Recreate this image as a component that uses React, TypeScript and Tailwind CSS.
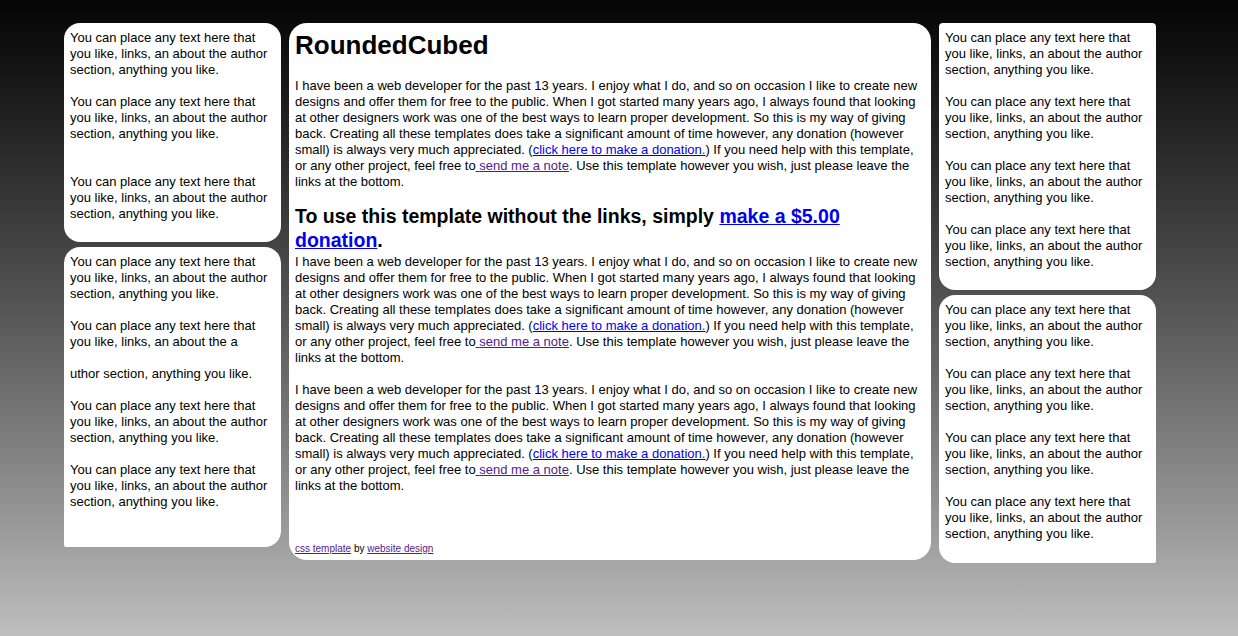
const sideText = "You can place any text here that you like, links, an about the author section, anything you like.";

function Paragraph() {
  return (
    <p className="leading-4">
      I have been a web developer for the past 13 years. I enjoy what I do, and so on occasion I like to create new
      designs and offer them for free to the public. When I got started many years ago, I always found that looking at
      other designers work was one of the best ways to learn proper development. So this is my way of giving back.
      Creating all these templates does take a significant amount of time however, any donation (however small) is
      always very much appreciated. (
      <a href="#" className="text-[#0000ee] underline">
        click here to make a donation.
      </a>
      ) If you need help with this template, or any other project, feel free to
      <a href="#" className="text-[#551a8b] underline">
        {" "}send me a note
      </a>
      . Use this template however you wish, just please leave the links at the bottom.
    </p>
  );
}

export default function App() {
  return (
    <div className="min-h-[636px] bg-linear-to-b from-[#060606] to-[#bebebe] font-['Liberation_Sans',Arial,sans-serif] text-[13px] leading-4 text-black">
      <div className="flex items-start gap-2 pl-16 pt-[23px]">
        {/* left column */}
        <div className="flex w-[217px] flex-col gap-[5px]">
          <div className="rounded-2xl bg-white px-[6px] pt-[7px] pb-[4px]">
            {sideText}
            <br />
            <br />
            {sideText}
            <br />
            <br />
            <br />
            {sideText}
            <br />
            <br />
          </div>
          <div className="rounded-2xl rounded-bl-[2px] bg-white px-[6px] pt-[7px] pb-[5px]">
            {sideText}
            <br />
            <br />
            You can place any text here that you like, links, an about the a
            <br />
            <br />
            uthor section, anything you like.
            <br />
            <br />
            {sideText}
            <br />
            <br />
            {sideText}
            <br />
            <br />
            <br />
          </div>
        </div>

        {/* main content */}
        <div className="w-[642px] rounded-[18px] bg-white px-[6px] pt-[7px] pb-[5px]">
          <h1 className="text-[26px] leading-[30px] font-bold">RoundedCubed</h1>
          <div className="mt-[18px]">
            <Paragraph />
          </div>
          <h2 className="mt-[14px] text-[19.5px] leading-6 font-bold">
            To use this template without the links, simply{" "}
            <a href="#" className="text-[#0000ee] underline">
              make a $5.00 donation
            </a>
            .
          </h2>
          <div className="mt-[2px]">
            <Paragraph />
          </div>
          <div className="mt-4">
            <Paragraph />
          </div>
          <div className="mt-[49px] text-[10px] leading-3">
            <a href="#" className="text-[#551a8b] underline">
              css template
            </a>{" "}
            by{" "}
            <a href="#" className="text-[#551a8b] underline">
              website design
            </a>
          </div>
        </div>

        {/* right column */}
        <div className="flex w-[217px] flex-col gap-[5px]">
          <div className="rounded-2xl rounded-tl-[4px] rounded-tr-[4px] bg-white px-[6px] pt-[7px] pb-[4px]">
            {sideText}
            <br />
            <br />
            {sideText}
            <br />
            <br />
            {sideText}
            <br />
            <br />
            {sideText}
            <br />
            <br />
          </div>
          <div className="rounded-2xl rounded-br-[2px] bg-white px-[6px] pt-[7px] pb-[5px]">
            {sideText}
            <br />
            <br />
            {sideText}
            <br />
            <br />
            {sideText}
            <br />
            <br />
            {sideText}
            <br />
            <br />
          </div>
        </div>
      </div>
    </div>
  );
}
